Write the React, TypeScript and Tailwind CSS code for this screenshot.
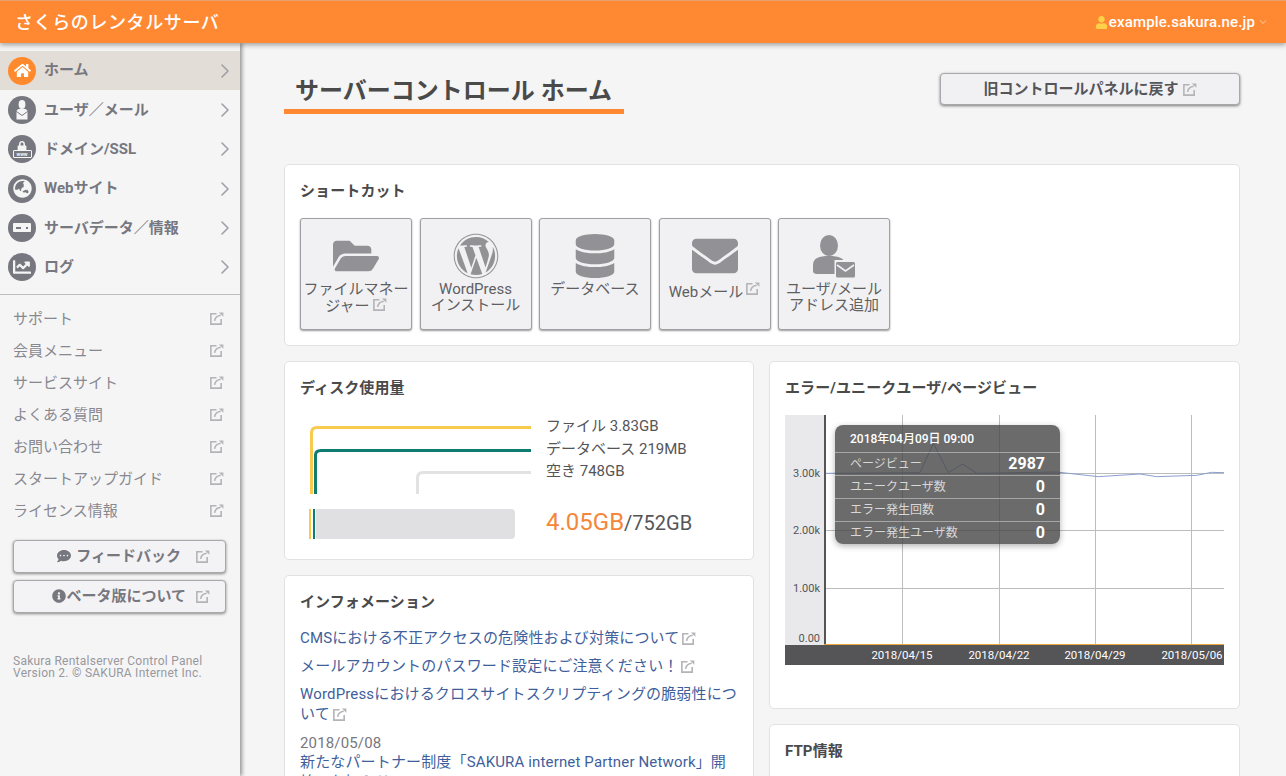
import React from "react";
import { FaHome, FaChevronDown, FaUser, FaFolderOpen, FaWordpress, FaDatabase, FaEnvelope, FaGlobeAsia, FaChartLine, FaCommentDots, FaInfoCircle, FaLock } from "react-icons/fa";
import { LuChevronRight } from "react-icons/lu";

function Ext({ className = "" }: { className?: string }) {
  return (
    <svg viewBox="0 0 16 16" className={"inline-block shrink-0 " + className} fill="none" stroke="#b4b4b8" strokeWidth="1.7">
      <path d="M8 3H2v11h11V8.5" />
      <path d="M6 10.5C6.5 7 9 5 12.5 4.6" />
      <path d="M10.5 1.5H15.3V6.2L10.5 1.5Z" fill="#b4b4b8" stroke="none" />
    </svg>
  );
}

function UserMail({ className = "", fill = "#fff", cut = "#77777f" }: { className?: string; fill?: string; cut?: string }) {
  return (
    <svg viewBox="0 0 44 43" className={className}>
      <ellipse cx="17" cy="10.5" rx="9" ry="10.5" fill={fill} />
      <path d="M1 30c0-7 6-9 16-9s16 2 16 9v9H5c-2.5 0-4-1-4-3Z" fill={fill} />
      <path d="M22.5 25h21.5v18H22.5Z" fill={cut} />
      <rect x="24" y="27" width="19" height="15.5" rx="1.5" fill={fill} />
      <path d="M25 30l8.5 6 8.5-6" fill="none" stroke={cut} strokeWidth="1.7" />
    </svg>
  );
}

const navItems = [
  { label: "ホーム", active: true },
  { label: "ユーザ／メール" },
  { label: "ドメイン/SSL" },
  { label: "Webサイト" },
  { label: "サーバデータ／情報" },
  { label: "ログ" },
];

function NavIcon({ i }: { i: number }) {
  if (i === 0) return <FaHome className="text-white text-[17px]" />;
  if (i === 1)
    return (
      <svg viewBox="0 0 28 28" className="w-7 h-7">
        <ellipse cx="14" cy="8.5" rx="3.4" ry="4.4" fill="#f5f5f6" />
        <path d="M8.5 16c0-2.5 2.5-3.4 5.5-3.4s5.5.9 5.5 3.4v7.5h-11Z" fill="#f5f5f6" />
        <path d="M8.5 15.5l5.5 4 5.5-4" fill="none" stroke="#77777f" strokeWidth="1" />
      </svg>
    );
  if (i === 2)
    return (
      <div className="flex flex-col items-center">
        <FaLock className="text-[#f5f5f6] text-[10px] -mb-px" />
        <div className="w-[19px] h-[8px] border border-[#f5f5f6] rounded-[1px] text-[5px] leading-[6px] text-[#f5f5f6] text-center font-bold">www</div>
      </div>
    );
  if (i === 3) return <FaGlobeAsia className="text-[#f5f5f6] text-[19px]" />;
  if (i === 4)
    return (
      <div className="w-[18px] h-[9px] bg-[#f5f5f6] rounded-[1px] flex items-center justify-between px-[3px]">
        <span className="w-[5px] h-[2px] bg-[#77777f]" />
        <span className="w-[2px] h-[2px] bg-[#77777f]" />
      </div>
    );
  return <FaChartLine className="text-[#f5f5f6] text-[18px]" />;
}

const links = ["サポート", "会員メニュー", "サービスサイト", "よくある質問", "お問い合わせ", "スタートアップガイド", "ライセンス情報"];

function Sidebar() {
  return (
    <aside className="w-[240px] shrink-0 bg-[#f5f5f6] shadow-[2px_0_4px_rgba(0,0,0,0.4)] pt-2 z-10 relative">
      <nav>
        {navItems.map((n, i) => (
          <div key={n.label} className={"flex items-center h-[39.3px] pl-2 pr-[3px] " + (n.active ? "bg-[#e3ddd8]" : "")}>
            <span className={"w-7 h-7 rounded-full flex items-center justify-center shrink-0 " + (n.active ? "bg-[#ff8a2e]" : "bg-[#77777f]")}>
              <NavIcon i={i} />
            </span>
            <span className="ml-2 text-[15px] font-bold text-[#77777f] flex-1">{n.label}</span>
            <LuChevronRight className="text-[#a0a0a6] text-[24px] [stroke-width:1.6]" />
          </div>
        ))}
      </nav>
      <div className="border-t border-[#bdbdbd] mt-[7px] pt-[8px]">
        {links.map((l) => (
          <div key={l} className="flex items-center justify-between h-8 pl-[13px] pr-[16px] text-[15px] text-[#888890]">
            <span>{l}</span>
            <Ext className="w-[15px] h-[15px]" />
          </div>
        ))}
      </div>
      <div className="pl-[13px] pr-[14px] mt-[13px] flex flex-col gap-[7px]">
        <div className="h-[33px] border border-[#a8a8ac] rounded-[4px] bg-[#f3f3f5] shadow-[0_1px_3px_rgba(0,0,0,0.45)] flex items-center justify-end pr-[15px] text-[15px] font-bold text-[#77777f]">
          <FaCommentDots className="mr-[5px] text-[14px]" />
          <span className="mr-[14px]">フィードバック</span>
          <Ext className="w-[15px] h-[15px]" />
        </div>
        <div className="h-[33px] border border-[#a8a8ac] rounded-[4px] bg-[#f3f3f5] shadow-[0_1px_3px_rgba(0,0,0,0.45)] flex items-center justify-end pr-[15px] text-[15px] font-bold text-[#77777f]">
          <FaInfoCircle className="text-[14px]" />
          <span className="mr-[9px]">ベータ版について</span>
          <Ext className="w-[15px] h-[15px]" />
        </div>
      </div>
      <p className="px-[13px] mt-[42px] text-[12px] leading-[12px] text-[#98989e] tracking-[0.25px] whitespace-nowrap">
        Sakura Rentalserver Control Panel
        <br />
        Version 2. © SAKURA Internet Inc.
      </p>
    </aside>
  );
}

const shortcuts = [
  { icon: <FaFolderOpen className="text-[#929296] text-[46px]" />, label: <>ファイルマネー<br />ジャー<Ext className="w-[15px] h-[15px] ml-[2px] align-[-1px]" /></>, },
  { icon: <FaWordpress className="text-[#929296] text-[46px]" />, label: <>WordPress<br />インストール</> },
  { icon: <FaDatabase className="text-[#929296] text-[44px]" />, label: <>データベース</> },
  { icon: <FaEnvelope className="text-[#929296] text-[46px]" />, label: <>Webメール<Ext className="w-[15px] h-[15px] ml-[2px] align-[1px]" /></>, },
  { icon: <UserMail className="w-[44px] h-[43px]" fill="#929296" cut="#f1f1f3" />, label: <>ユーザ/メール<br />アドレス追加</> },
];

function Card({ title, className = "", children }: { title: string; className?: string; children?: React.ReactNode }) {
  return (
    <section className={"bg-white border border-[#e2e2e2] rounded-[5px] px-[15px] pt-[15px] " + className}>
      <h2 className="text-[15px] leading-[23px] font-bold text-[#4a4a4a] tracking-[0.1px]">{title}</h2>
      {children}
    </section>
  );
}

function Chart() {
  const pts = [[165,220],[450,218],[490,130],[535,218],[578,192],[620,220],[860,216],[985,230],[1110,222],[1160,230],[1280,226],[1325,217],[1362,218]]
    .map(([x, y]) => `${x / 3 - 15},${y / 3 - 15}`).join(" ");
  return (
    <div className="relative mt-[15px] w-[439px] h-[250px]">
      <svg viewBox="0 0 439 250" className="w-full h-full block">
        <rect x="0" y="0" width="39" height="230" fill="#e9e9eb" />
        {[58, 115, 173].map((y) => <line key={y} x1="39" x2="439" y1={y + 0.5} y2={y + 0.5} stroke="#bdbdbd" />)}
        {[117, 214, 310, 406].map((x) => <line key={x} x1={x + 0.5} x2={x + 0.5} y1="0" y2="230" stroke="#bdbdbd" />)}
        <polyline points={pts} fill="none" stroke="#8b9fd0" strokeWidth="1" />
        <rect x="39" y="0" width="2" height="230" fill="#555" />
        <rect x="39" y="229" width="400" height="2" fill="#e8a93a" />
        <rect x="0" y="230" width="439" height="20" fill="#555558" />
        <g fontFamily="Roboto, sans-serif" fontSize="11" fill="#555">
          <text x="35" y="62" textAnchor="end">3.00k</text>
          <text x="35" y="119" textAnchor="end">2.00k</text>
          <text x="35" y="177" textAnchor="end">1.00k</text>
          <text x="35" y="227" textAnchor="end">0.00</text>
        </g>
        <g fontFamily="Roboto, sans-serif" fontSize="11.5" fill="#fff" textAnchor="middle">
          <text x="117" y="244">2018/04/15</text>
          <text x="214" y="244">2018/04/22</text>
          <text x="310" y="244">2018/04/29</text>
          <text x="407" y="244">2018/05/06</text>
        </g>
      </svg>
      <div className="absolute left-[50px] top-[10px] w-[225px] rounded-[8px] bg-[rgba(70,70,70,0.8)] shadow-[0_2px_6px_rgba(0,0,0,0.3)] text-white">
        <div className="h-[27px] flex items-center px-[15px] text-[12px] font-medium">2018年04月09日 09:00</div>
        {[["ページビュー", "2987"], ["ユニークユーザ数", "0"], ["エラー発生回数", "0"], ["エラー発生ユーザ数", "0"]].map(([k, v]) => (
          <div key={k} className="h-[23px] border-t border-[rgba(255,255,255,0.4)] flex items-center justify-between pl-[15px] pr-[15px] text-[12px] text-[#d8d8d8]">
            <span>{k}</span>
            <span className="text-white font-bold text-[16px]">{v}</span>
          </div>
        ))}
      </div>
    </div>
  );
}

const infoExt = "w-[15px] h-[15px] ml-[2px] my-[-5px] align-[2px]";

export default function App() {
  return (
    <div className="h-[776px] w-[1286px] overflow-hidden flex flex-col bg-[#f5f5f5] font-[Roboto,'Noto_Sans_CJK_JP',sans-serif]">
      <header className="h-[43px] shrink-0 bg-[#ff8833] border-t border-[#e8a070] shadow-[0_2px_5px_rgba(0,0,0,0.35)] z-20 relative flex items-center justify-between pl-[15px] pr-[19px] text-white">
        <h1 className="text-[18px] font-medium tracking-[0.6px]">さくらのレンタルサーバ</h1>
        <div className="flex items-center text-[15px] font-medium">
          <FaUser className="text-[#ffd04a] text-[13px] mr-[1px]" />
          <span className="tracking-[0.15px]">example.sakura.ne.jp</span>
          <FaChevronDown className="text-[#ffb070] text-[8px] ml-[4px]" />
        </div>
      </header>
      <div className="flex flex-1 min-h-0">
        <Sidebar />
        <main className="flex-1 pl-[44px] pr-[46px] pt-[30px] min-w-0">
          <div className="flex justify-between items-start h-[91px]">
            <div className="w-[340px] h-[41px] border-b-[5px] border-[#ff8833] pl-[11px] pt-[2px] whitespace-nowrap">
              <span className="text-[24px] leading-[32px] font-bold text-[#4a4a4a]">サーバーコントロール ホーム</span>
            </div>
            <div className="w-[300px] h-[32px] border border-[#a8a8ac] rounded-[4px] bg-[#f1f1f4] shadow-[0_1px_3px_rgba(0,0,0,0.5)] flex items-center justify-center text-[15px] font-bold text-[#55555a]">
              旧コントロールパネルに戻す
              <Ext className="w-[15px] h-[15px] ml-[3px]" />
            </div>
          </div>
          <Card title="ショートカット" className="h-[182px]">
            <div className="flex gap-[7.5px] mt-[15px]">
              {shortcuts.map((s, i) => (
                <div key={i} className="w-[112px] h-[112px] bg-[#f1f1f3] border border-[#a0a0a4] rounded-[3px] shadow-[0_1px_2px_rgba(0,0,0,0.4)] flex flex-col items-center pt-[13px] text-[15px] leading-[16px] text-[#5f5f63] text-center">
                  <div className="h-[48px] flex items-center justify-center">{s.icon}</div>
                  <div className="mt-[1px] whitespace-nowrap">{s.label}</div>
                </div>
              ))}
            </div>
          </Card>
          <div className="grid grid-cols-[470px_471px] gap-x-[15px] mt-[15px]">
            <div className="flex flex-col gap-[15px]">
              <Card title="ディスク使用量" className="h-[199px]">
                <div className="flex mt-[25px]">
                  <svg viewBox="0 0 232 120" className="w-[232px] h-[120px] shrink-0">
                    <path d="M11.5 69V8Q11.5 2.5 17 2.5H231" fill="none" stroke="#f8ca4e" strokeWidth="3" />
                    <path d="M15.5 69V30Q15.5 25.5 21 25.5H231" fill="none" stroke="#0f7c72" strokeWidth="3" />
                    <path d="M117.5 69V53Q117.5 47.5 123 47.5H231" fill="none" stroke="#e2e2e2" strokeWidth="3" />
                    <rect x="9" y="84" width="2" height="30" fill="#f8ca4e" />
                    <rect x="13" y="84" width="2" height="30" fill="#0f7c72" />
                    <path d="M16 84H211a4 4 0 0 1 4 4v22a4 4 0 0 1-4 4H16Z" fill="#e0e0e2" />
                  </svg>
                  <div className="ml-[14px] text-[15px] leading-[22.5px] text-[#555558]">
                    <div className="-mt-[10px] whitespace-nowrap">ファイル 3.83GB</div>
                    <div className="whitespace-nowrap">データベース 219MB</div>
                    <div className="whitespace-nowrap">空き 748GB</div>
                    <div className="mt-[23px] whitespace-nowrap leading-[32px]">
                      <span className="text-[24px] text-[#f5873a]">4.05GB</span>
                      <span className="text-[20px]">/752GB</span>
                    </div>
                  </div>
                </div>
              </Card>
              <Card title="インフォメーション" className="h-[300px]">
                <div className="mt-[14px] text-[15px] leading-[20px] text-[#3f5f9c] tracking-[0.15px]">
                  <p>CMSにおける不正アクセスの危険性および対策について<Ext className={infoExt} /></p>
                  <p className="mt-[8px]">メールアカウントのパスワード設定にご注意ください！<Ext className={infoExt} /></p>
                  <p className="mt-[8px]">WordPressにおけるクロスサイトスクリプティングの脆弱性について<Ext className={infoExt} /></p>
                  <p className="mt-[10px] text-[#77777f] leading-[18px]">2018/05/08</p>
                  <p className="leading-[20px]">新たなパートナー制度「SAKURA internet Partner Network」開始のお知らせ<Ext className={infoExt} /></p>
                </div>
              </Card>
            </div>
            <div className="flex flex-col gap-[15px]">
              <Card title="エラー/ユニークユーザ/ページビュー" className="h-[348px]">
                <Chart />
              </Card>
              <Card title="FTP情報" className="h-[200px]" />
            </div>
          </div>
        </main>
      </div>
    </div>
  );
}
